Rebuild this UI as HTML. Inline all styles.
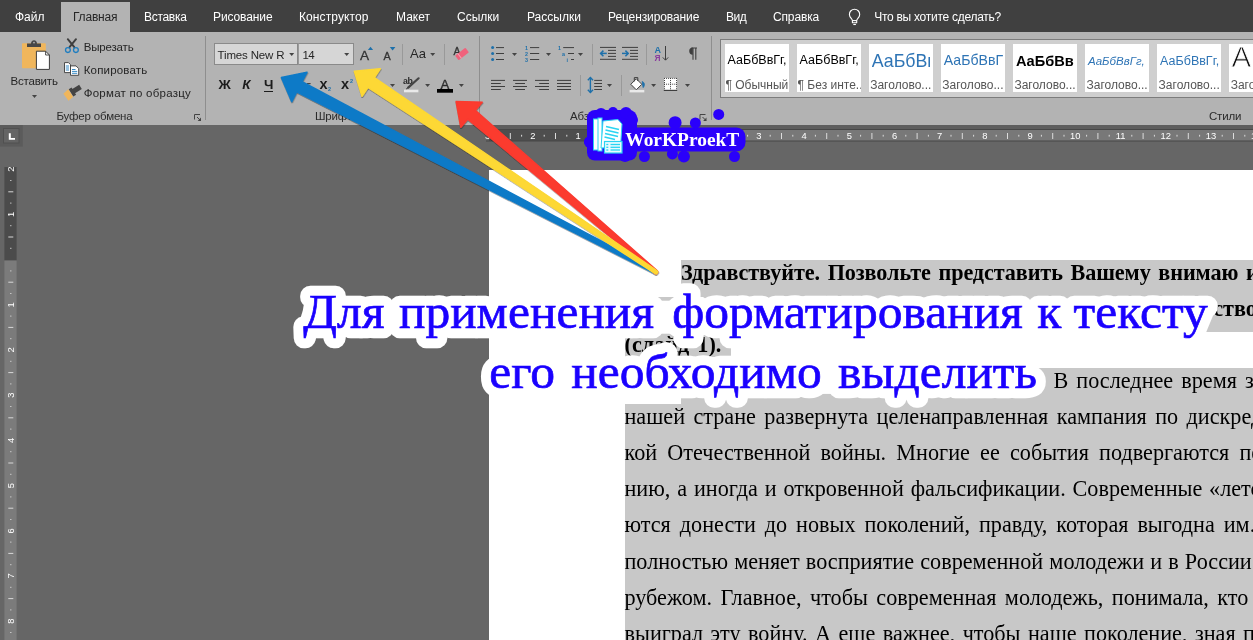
<!DOCTYPE html>
<html><head><meta charset="utf-8">
<style>
html,body{margin:0;padding:0;}
body{width:1253px;height:640px;overflow:hidden;position:relative;background:#666666;font-family:"Liberation Sans",sans-serif;}
.abs{position:absolute;}
#topbar{left:0;top:0;width:1253px;height:32px;background:#404040;}
.tab{position:absolute;top:10px;font-size:12px;color:#fff;white-space:nowrap;line-height:14px;}
#hometab{left:61px;top:2px;width:69px;height:30px;background:#b3b3b3;}
#ribbon{left:0;top:32px;width:1253px;height:93px;background:#b3b3b3;}
.rt{position:absolute;font-size:11.5px;color:#262626;white-space:nowrap;line-height:14px;}
.gl{position:absolute;font-size:11.5px;color:#2b2b2b;white-space:nowrap;line-height:14px;letter-spacing:-0.18px;}
.sep{position:absolute;width:1px;background:#8e8e8e;}
#page{left:489px;top:170px;width:800px;height:480px;background:#fff;}
.sel{position:absolute;background:#c8c8c8;}
.bt{position:absolute;font-family:"Liberation Serif",serif;color:#000;white-space:nowrap;font-size:22.2px;line-height:26px;}
.tile{position:absolute;top:44px;width:64.3px;height:47.7px;background:#fff;overflow:hidden;}
.tile .pv{position:absolute;left:4px;white-space:nowrap;}
.tile .lb{position:absolute;left:1.5px;top:33.7px;font-size:12px;color:#555;white-space:nowrap;line-height:14px;}
svg{position:absolute;left:0;top:0;}
</style></head><body>
<div id="wrap" style="position:absolute;left:0;top:0;width:1253px;height:640px;will-change:transform;">
<div id="topbar" class="abs"></div>
<div id="hometab" class="abs"></div>
<div id="ribbon" class="abs"></div>
<div id="tabs">
<span class="tab" style="left:15px">Файл</span>
<span class="tab" style="left:73px;color:#262626;letter-spacing:-0.2px">Главная</span>
<span class="tab" style="left:144px;letter-spacing:-0.3px">Вставка</span>
<span class="tab" style="left:213px;letter-spacing:-0.1px">Рисование</span>
<span class="tab" style="left:299px;letter-spacing:0.1px">Конструктор</span>
<span class="tab" style="left:396px">Макет</span>
<span class="tab" style="left:457px">Ссылки</span>
<span class="tab" style="left:527px">Рассылки</span>
<span class="tab" style="left:608px;letter-spacing:-0.1px">Рецензирование</span>
<span class="tab" style="left:726px;letter-spacing:-0.5px">Вид</span>
<span class="tab" style="left:773px;letter-spacing:-0.15px">Справка</span>
<span class="tab" style="left:874.2px;letter-spacing:-0.27px">Что вы хотите сделать?</span>
</div>

<!-- clipboard group text -->
<span class="rt" style="left:10.5px;top:74px;letter-spacing:-0.19px">Вставить</span>
<span class="rt" style="left:83.7px;top:40px;letter-spacing:-0.17px">Вырезать</span>
<span class="rt" style="left:83.7px;top:63px;letter-spacing:0.18px">Копировать</span>
<span class="rt" style="left:83.7px;top:86px;letter-spacing:0.25px">Формат по образцу</span>
<span class="gl" style="left:56.5px;top:108.6px">Буфер обмена</span>
<div class="sep" style="left:205px;top:36px;height:84px"></div>

<!-- font group -->
<div class="abs" style="left:214px;top:43px;width:84px;height:22px;background:#d6d6d6;border:1px solid #8a8a8a;box-sizing:border-box"></div>
<div class="abs" style="left:298px;top:43px;width:56px;height:22px;background:#d6d6d6;border:1px solid #8a8a8a;border-left:1px solid #9a9a9a;box-sizing:border-box"></div>
<span class="rt" style="left:217.6px;top:47.5px;letter-spacing:-0.16px">Times New R</span>
<span class="rt" style="left:302.4px;top:47.5px;letter-spacing:-0.5px">14</span>
<span class="rt" style="left:218.4px;top:77.5px;font-weight:bold;font-size:13.6px;color:#1c1c1c">Ж</span>
<span class="rt" style="left:242.2px;top:77.5px;font-weight:bold;font-style:italic;font-size:13.4px;color:#1c1c1c">К</span>
<span class="rt" style="left:264px;top:77.5px;font-weight:bold;font-size:13.4px;color:#1c1c1c;border-bottom:1.5px solid #1c1c1c;line-height:13px;padding-bottom:0px">Ч</span>
<span class="rt" style="left:319.5px;top:76.6px;font-weight:bold;font-size:14.5px;color:#1c1c1c">x</span>
<span class="rt" style="left:341px;top:76.6px;font-weight:bold;font-size:14.5px;color:#1c1c1c">x</span>
<span class="rt" style="left:410px;top:47px;font-size:13px">Aa</span>
<span class="gl" style="left:315px;top:108.6px">Шрифт</span>
<div class="sep" style="left:402px;top:44px;height:21px;background:#999"></div>
<div class="sep" style="left:444px;top:44px;height:21px;background:#999"></div>
<div class="sep" style="left:478.5px;top:36px;height:84px"></div>

<!-- paragraph group -->
<span class="gl" style="left:570px;top:108.6px">Абзац</span>
<div class="sep" style="left:592px;top:44px;height:21px;background:#999"></div>
<div class="sep" style="left:645.5px;top:44px;height:21px;background:#999"></div>
<div class="sep" style="left:580px;top:75px;height:21px;background:#999"></div>
<div class="sep" style="left:621px;top:75px;height:21px;background:#999"></div>
<div class="sep" style="left:711px;top:36px;height:84px"></div>

<!-- styles gallery -->
<div class="abs" style="left:720px;top:38.5px;width:540px;height:59px;border:1px solid #7c7c7c;box-sizing:border-box;background:#cfcfcf"></div>
<div class="tile" style="left:724.5px"><span class="pv" style="top:9px;font-size:12.5px;color:#000;left:3px">АаБбВвГг,</span><span class="lb" style="left:1px">¶ Обычный</span></div>
<div class="tile" style="left:796.6px"><span class="pv" style="top:9px;font-size:12.5px;color:#000;left:3px">АаБбВвГг,</span><span class="lb" style="left:1px">¶ Без инте...</span></div>
<div class="tile" style="left:868.7px"><span class="pv" style="top:7px;font-size:17.8px;color:#2e74b5;left:3px;width:58.3px;overflow:hidden;display:block">АаБбВв</span><span class="lb">Заголово...</span></div>
<div class="tile" style="left:940.8px"><span class="pv" style="top:8px;font-size:14.1px;color:#2e74b5;left:3px">АаБбВвГ</span><span class="lb">Заголово...</span></div>
<div class="tile" style="left:1012.9px"><span class="pv" style="top:8.5px;font-size:14.6px;color:#000;font-weight:bold;left:3px">АаБбВв</span><span class="lb">Заголово...</span></div>
<div class="tile" style="left:1085px"><span class="pv" style="top:10.6px;font-size:11.5px;color:#2e74b5;font-style:italic;left:3px">АаБбВвГг,</span><span class="lb">Заголово...</span></div>
<div class="tile" style="left:1157.1px"><span class="pv" style="top:10px;font-size:12.5px;color:#2e74b5;left:3px">АаБбВвГг,</span><span class="lb">Заголово...</span></div>
<div class="tile" style="left:1229.2px"><span class="pv" style="top:-4.1px;font-size:29.5px;color:#111;left:2.2px;-webkit-text-stroke:0.8px #fff;">А</span><span class="lb">Заголово...</span></div>
<span class="gl" style="left:1209px;top:108.6px">Стили</span>

<div id="page" class="abs"></div>

<!-- selection highlights -->
<div class="sel" style="left:681px;top:260px;width:580px;height:37px"></div>
<div class="sel" style="left:624.5px;top:296.5px;width:640px;height:35px"></div>
<div class="sel" style="left:624.5px;top:331.5px;width:106px;height:25px"></div>
<div class="sel" style="left:681px;top:368px;width:580px;height:37px"></div>
<div class="sel" style="left:624.5px;top:404.4px;width:640px;height:240px"></div>

<span class="bt" id="b1" style="word-spacing:2.3px;letter-spacing:-0.1px;left:681px;top:260.1px;font-weight:bold">Здравствуйте. Позвольте представить Вашему внимаю ис</span>
<span class="bt" id="b2" style="left:624.5px;top:296.1px;font-weight:bold;word-spacing:2px">следовательскую работу на тему «Великая</span>
<span class="bt" id="b2b" style="left:1190.6px;top:296.1px;font-weight:bold">чество</span>
<span class="bt" id="b3" style="word-spacing:2.5px;letter-spacing:0px;left:624.5px;top:332.3px;font-weight:bold">(слайд 1).</span>
<span class="bt" id="l1" style="word-spacing:2.5px;letter-spacing:0px;left:1053.5px;top:367.6px">В последнее время за</span>
<span class="bt" id="l2" style="word-spacing:2.87px;letter-spacing:0px;left:624.5px;top:403.8px">нашей стране развернута целенаправленная кампания по дискреди</span>
<span class="bt" id="l3" style="word-spacing:4.65px;letter-spacing:0px;left:624.5px;top:440.0px">кой Отечественной войны. Многие ее события подвергаются пе</span>
<span class="bt" id="l4" style="word-spacing:1.3px;letter-spacing:0px;left:624.5px;top:476.2px">нию, а иногда и откровенной фальсификации. Современные «летоп</span>
<span class="bt" id="l5" style="word-spacing:3.4px;letter-spacing:0px;left:624.5px;top:512.4px">ются донести до новых поколений, правду, которая выгодна им. </span>
<span class="bt" id="l6" style="word-spacing:0.6px;letter-spacing:0px;left:624.5px;top:548.6px">полностью меняет восприятие современной молодежи и в России </span>
<span class="bt" id="l7" style="word-spacing:2.9px;letter-spacing:0px;left:624.5px;top:584.8px">рубежом. Главное, чтобы современная молодежь, понимала, кто </span>
<span class="bt" id="l8" style="word-spacing:1.9px;letter-spacing:0px;left:624.5px;top:621.0px">выиграл эту войну. А еще важнее, чтобы наше поколение, зная п</span>
<svg width="1253" height="640" viewBox="0 0 1253 640"><defs><filter id="sh" x="-5%" y="-5%" width="110%" height="110%"><feDropShadow dx="0.3" dy="1" stdDeviation="0.6" flood-color="#000" flood-opacity="0.45"/></filter></defs>
<g id="hruler"><rect x="485" y="125" width="780" height="5" fill="#5e5e5e"/>
<rect x="489" y="129.5" width="135.5" height="11.5" fill="#4e4e4e"/>
<rect x="624.5" y="129.5" width="640" height="11.5" fill="#787878"/>
<rect x="486" y="129" width="780" height="1" fill="#474747"/>
<rect x="486" y="140.5" width="780" height="1" fill="#474747"/>
<text x="487.7" y="139.3" font-size="9.4" fill="#fff" text-anchor="middle" font-family="Liberation Sans">3</text>
<rect x="498.5" y="134.8" width="1" height="1.8" fill="#dcdcdc"/>
<rect x="509.8" y="133" width="1" height="6" fill="#dcdcdc"/>
<rect x="521.1" y="134.8" width="1" height="1.8" fill="#dcdcdc"/>
<text x="532.9" y="139.3" font-size="9.4" fill="#fff" text-anchor="middle" font-family="Liberation Sans">2</text>
<rect x="543.7" y="134.8" width="1" height="1.8" fill="#dcdcdc"/>
<rect x="555.0" y="133" width="1" height="6" fill="#dcdcdc"/>
<rect x="566.3" y="134.8" width="1" height="1.8" fill="#dcdcdc"/>
<text x="578.1" y="139.3" font-size="9.4" fill="#fff" text-anchor="middle" font-family="Liberation Sans">1</text>
<rect x="588.9" y="134.8" width="1" height="1.8" fill="#dcdcdc"/>
<rect x="600.2" y="133" width="1" height="6" fill="#dcdcdc"/>
<rect x="611.5" y="134.8" width="1" height="1.8" fill="#dcdcdc"/>
<rect x="634.1" y="134.8" width="1" height="1.8" fill="#dcdcdc"/>
<rect x="645.4" y="133" width="1" height="6" fill="#dcdcdc"/>
<rect x="656.7" y="134.8" width="1" height="1.8" fill="#dcdcdc"/>
<text x="668.5" y="139.3" font-size="9.4" fill="#fff" text-anchor="middle" font-family="Liberation Sans">1</text>
<rect x="679.3" y="134.8" width="1" height="1.8" fill="#dcdcdc"/>
<rect x="690.6" y="133" width="1" height="6" fill="#dcdcdc"/>
<rect x="701.9" y="134.8" width="1" height="1.8" fill="#dcdcdc"/>
<text x="713.7" y="139.3" font-size="9.4" fill="#fff" text-anchor="middle" font-family="Liberation Sans">2</text>
<rect x="724.5" y="134.8" width="1" height="1.8" fill="#dcdcdc"/>
<rect x="735.8" y="133" width="1" height="6" fill="#dcdcdc"/>
<rect x="747.1" y="134.8" width="1" height="1.8" fill="#dcdcdc"/>
<text x="758.9" y="139.3" font-size="9.4" fill="#fff" text-anchor="middle" font-family="Liberation Sans">3</text>
<rect x="769.7" y="134.8" width="1" height="1.8" fill="#dcdcdc"/>
<rect x="781.0" y="133" width="1" height="6" fill="#dcdcdc"/>
<rect x="792.3" y="134.8" width="1" height="1.8" fill="#dcdcdc"/>
<text x="804.1" y="139.3" font-size="9.4" fill="#fff" text-anchor="middle" font-family="Liberation Sans">4</text>
<rect x="814.9" y="134.8" width="1" height="1.8" fill="#dcdcdc"/>
<rect x="826.2" y="133" width="1" height="6" fill="#dcdcdc"/>
<rect x="837.5" y="134.8" width="1" height="1.8" fill="#dcdcdc"/>
<text x="849.3" y="139.3" font-size="9.4" fill="#fff" text-anchor="middle" font-family="Liberation Sans">5</text>
<rect x="860.1" y="134.8" width="1" height="1.8" fill="#dcdcdc"/>
<rect x="871.4" y="133" width="1" height="6" fill="#dcdcdc"/>
<rect x="882.7" y="134.8" width="1" height="1.8" fill="#dcdcdc"/>
<text x="894.5" y="139.3" font-size="9.4" fill="#fff" text-anchor="middle" font-family="Liberation Sans">6</text>
<rect x="905.3" y="134.8" width="1" height="1.8" fill="#dcdcdc"/>
<rect x="916.6" y="133" width="1" height="6" fill="#dcdcdc"/>
<rect x="927.9" y="134.8" width="1" height="1.8" fill="#dcdcdc"/>
<text x="939.7" y="139.3" font-size="9.4" fill="#fff" text-anchor="middle" font-family="Liberation Sans">7</text>
<rect x="950.5" y="134.8" width="1" height="1.8" fill="#dcdcdc"/>
<rect x="961.8" y="133" width="1" height="6" fill="#dcdcdc"/>
<rect x="973.1" y="134.8" width="1" height="1.8" fill="#dcdcdc"/>
<text x="984.9" y="139.3" font-size="9.4" fill="#fff" text-anchor="middle" font-family="Liberation Sans">8</text>
<rect x="995.7" y="134.8" width="1" height="1.8" fill="#dcdcdc"/>
<rect x="1007.0" y="133" width="1" height="6" fill="#dcdcdc"/>
<rect x="1018.3" y="134.8" width="1" height="1.8" fill="#dcdcdc"/>
<text x="1030.1" y="139.3" font-size="9.4" fill="#fff" text-anchor="middle" font-family="Liberation Sans">9</text>
<rect x="1040.9" y="134.8" width="1" height="1.8" fill="#dcdcdc"/>
<rect x="1052.2" y="133" width="1" height="6" fill="#dcdcdc"/>
<rect x="1063.5" y="134.8" width="1" height="1.8" fill="#dcdcdc"/>
<text x="1075.3" y="139.3" font-size="9.4" fill="#fff" text-anchor="middle" font-family="Liberation Sans">10</text>
<rect x="1086.1" y="134.8" width="1" height="1.8" fill="#dcdcdc"/>
<rect x="1097.4" y="133" width="1" height="6" fill="#dcdcdc"/>
<rect x="1108.7" y="134.8" width="1" height="1.8" fill="#dcdcdc"/>
<text x="1120.5" y="139.3" font-size="9.4" fill="#fff" text-anchor="middle" font-family="Liberation Sans">11</text>
<rect x="1131.3" y="134.8" width="1" height="1.8" fill="#dcdcdc"/>
<rect x="1142.6" y="133" width="1" height="6" fill="#dcdcdc"/>
<rect x="1153.9" y="134.8" width="1" height="1.8" fill="#dcdcdc"/>
<text x="1165.7" y="139.3" font-size="9.4" fill="#fff" text-anchor="middle" font-family="Liberation Sans">12</text>
<rect x="1176.5" y="134.8" width="1" height="1.8" fill="#dcdcdc"/>
<rect x="1187.8" y="133" width="1" height="6" fill="#dcdcdc"/>
<rect x="1199.1" y="134.8" width="1" height="1.8" fill="#dcdcdc"/>
<text x="1210.9" y="139.3" font-size="9.4" fill="#fff" text-anchor="middle" font-family="Liberation Sans">13</text>
<rect x="1221.7" y="134.8" width="1" height="1.8" fill="#dcdcdc"/>
<rect x="1233.0" y="133" width="1" height="6" fill="#dcdcdc"/>
<rect x="1244.3" y="134.8" width="1" height="1.8" fill="#dcdcdc"/>
<text x="1256.1" y="139.3" font-size="9.4" fill="#fff" text-anchor="middle" font-family="Liberation Sans">14</text>
<rect x="1266.9" y="134.8" width="1" height="1.8" fill="#dcdcdc"/>
<rect x="1278.2" y="133" width="1" height="6" fill="#dcdcdc"/>
<rect x="1289.5" y="134.8" width="1" height="1.8" fill="#dcdcdc"/></g>
<g id="vruler"><rect x="4.4" y="167" width="12.2" height="93.5" fill="#4b4b4b"/>
<rect x="4.4" y="260.5" width="12.2" height="400" fill="#7b7b7b"/>
<text transform="translate(14.2 169.2) rotate(-90)" font-size="9.4" fill="#fff" text-anchor="middle" font-family="Liberation Sans">2</text>
<rect x="10.2" y="180.0" width="1.2" height="1" fill="#d8d8d8"/>
<rect x="8.3" y="191.3" width="5" height="1" fill="#d8d8d8"/>
<rect x="10.2" y="202.6" width="1.2" height="1" fill="#d8d8d8"/>
<text transform="translate(14.2 214.4) rotate(-90)" font-size="9.4" fill="#fff" text-anchor="middle" font-family="Liberation Sans">1</text>
<rect x="10.2" y="225.2" width="1.2" height="1" fill="#d8d8d8"/>
<rect x="8.3" y="236.5" width="5" height="1" fill="#d8d8d8"/>
<rect x="10.2" y="247.8" width="1.2" height="1" fill="#d8d8d8"/>
<rect x="10.2" y="270.4" width="1.2" height="1" fill="#d8d8d8"/>
<rect x="8.3" y="281.7" width="5" height="1" fill="#d8d8d8"/>
<rect x="10.2" y="293.0" width="1.2" height="1" fill="#d8d8d8"/>
<text transform="translate(14.2 304.8) rotate(-90)" font-size="9.4" fill="#fff" text-anchor="middle" font-family="Liberation Sans">1</text>
<rect x="10.2" y="315.6" width="1.2" height="1" fill="#d8d8d8"/>
<rect x="8.3" y="326.9" width="5" height="1" fill="#d8d8d8"/>
<rect x="10.2" y="338.2" width="1.2" height="1" fill="#d8d8d8"/>
<text transform="translate(14.2 350.0) rotate(-90)" font-size="9.4" fill="#fff" text-anchor="middle" font-family="Liberation Sans">2</text>
<rect x="10.2" y="360.8" width="1.2" height="1" fill="#d8d8d8"/>
<rect x="8.3" y="372.1" width="5" height="1" fill="#d8d8d8"/>
<rect x="10.2" y="383.4" width="1.2" height="1" fill="#d8d8d8"/>
<text transform="translate(14.2 395.2) rotate(-90)" font-size="9.4" fill="#fff" text-anchor="middle" font-family="Liberation Sans">3</text>
<rect x="10.2" y="406.0" width="1.2" height="1" fill="#d8d8d8"/>
<rect x="8.3" y="417.3" width="5" height="1" fill="#d8d8d8"/>
<rect x="10.2" y="428.6" width="1.2" height="1" fill="#d8d8d8"/>
<text transform="translate(14.2 440.4) rotate(-90)" font-size="9.4" fill="#fff" text-anchor="middle" font-family="Liberation Sans">4</text>
<rect x="10.2" y="451.2" width="1.2" height="1" fill="#d8d8d8"/>
<rect x="8.3" y="462.5" width="5" height="1" fill="#d8d8d8"/>
<rect x="10.2" y="473.8" width="1.2" height="1" fill="#d8d8d8"/>
<text transform="translate(14.2 485.6) rotate(-90)" font-size="9.4" fill="#fff" text-anchor="middle" font-family="Liberation Sans">5</text>
<rect x="10.2" y="496.4" width="1.2" height="1" fill="#d8d8d8"/>
<rect x="8.3" y="507.7" width="5" height="1" fill="#d8d8d8"/>
<rect x="10.2" y="519.0" width="1.2" height="1" fill="#d8d8d8"/>
<text transform="translate(14.2 530.8) rotate(-90)" font-size="9.4" fill="#fff" text-anchor="middle" font-family="Liberation Sans">6</text>
<rect x="10.2" y="541.6" width="1.2" height="1" fill="#d8d8d8"/>
<rect x="8.3" y="552.9" width="5" height="1" fill="#d8d8d8"/>
<rect x="10.2" y="564.2" width="1.2" height="1" fill="#d8d8d8"/>
<text transform="translate(14.2 576.0) rotate(-90)" font-size="9.4" fill="#fff" text-anchor="middle" font-family="Liberation Sans">7</text>
<rect x="10.2" y="586.8" width="1.2" height="1" fill="#d8d8d8"/>
<rect x="8.3" y="598.1" width="5" height="1" fill="#d8d8d8"/>
<rect x="10.2" y="609.4" width="1.2" height="1" fill="#d8d8d8"/>
<text transform="translate(14.2 621.2) rotate(-90)" font-size="9.4" fill="#fff" text-anchor="middle" font-family="Liberation Sans">8</text>
<rect x="10.2" y="632.0" width="1.2" height="1" fill="#d8d8d8"/>
<rect x="8.3" y="643.3" width="5" height="1" fill="#d8d8d8"/>
<rect x="10.2" y="654.6" width="1.2" height="1" fill="#d8d8d8"/>
<text transform="translate(14.2 666.4) rotate(-90)" font-size="9.4" fill="#fff" text-anchor="middle" font-family="Liberation Sans">9</text>
<rect x="10.2" y="677.2" width="1.2" height="1" fill="#d8d8d8"/>
<rect x="8.3" y="688.5" width="5" height="1" fill="#d8d8d8"/>
<rect x="10.2" y="699.8" width="1.2" height="1" fill="#d8d8d8"/></g>
<rect x="0" y="125" width="22.8" height="21.6" fill="#5b5b5b"/>
<rect x="3.5" y="128.5" width="15.5" height="14.5" fill="#646464" stroke="#505050" stroke-width="1"/>
<path d="M8.8 133.3h2v4.6h4.2v1.9h-6.2z" fill="#fff"/>
<g id="icons">
<!-- lightbulb -->
<g fill="none" stroke="#fff" stroke-width="1.1" stroke-linejoin="round"><path d="M852.4 22.7 V20.6 C852.4 18.8 849.4 17.6 849.4 14.4 A5.15 5.15 0 0 1 859.7 14.4 C859.7 17.6 856.7 18.8 856.7 20.6 V22.7 Z"/><path d="M852.4 20.6 H856.7"/><path d="M853.3 24.5 H855.9"/></g>
<!-- paste -->
<rect x="22" y="43.3" width="23.8" height="25" rx="0.8" fill="#f0b65c"/>
<path d="M27 47 V43.6 H31 C31 41.8 32.2 40.3 34 40.3 C35.8 40.3 37 41.8 37 43.6 H41 V47 Z" fill="#484848"/>
<circle cx="34" cy="42.6" r="0.9" fill="#b3b3b3"/>
<path d="M36.4 51.2 H45.6 L49.4 55 V69.4 H36.4 Z" fill="#fff" stroke="#3c3c3c" stroke-width="1"/>
<path d="M45.6 51.2 V55 H49.4" fill="none" stroke="#3c3c3c" stroke-width="0.9"/>
<path d="M32 95 h5 l-2.5 3z" fill="#444"/>
<!-- scissors -->
<g stroke="#3e3e3e" stroke-width="1.9" stroke-linecap="round"><path d="M67.8 39.2 L74.3 47.2"/><path d="M76 39.2 L69.5 47.2"/></g>
<circle cx="67.9" cy="50.1" r="2.4" fill="none" stroke="#1e7dc0" stroke-width="1.3"/>
<circle cx="75.9" cy="50.1" r="2.4" fill="none" stroke="#1e7dc0" stroke-width="1.3"/>
<!-- copy -->
<path d="M64.5 62.6 H68.5 L70.5 64.6 V72.6 H64.5 Z" fill="#fff" stroke="#3c3c3c" stroke-width="0.9"/>
<g stroke="#1e7dc0" stroke-width="0.9"><path d="M65.8 66h3.2"/><path d="M65.8 68h3.2"/><path d="M65.8 70h3.2"/></g>
<path d="M70.5 65.9 H76 L78.7 68.6 V75.3 H70.5 Z" fill="#fff" stroke="#3c3c3c" stroke-width="0.9"/>
<g stroke="#1e7dc0" stroke-width="0.9"><path d="M72 69.5h3.5"/><path d="M72 71.4h5.2"/><path d="M72 73.3h5.2"/></g>
<!-- format painter -->
<g transform="translate(72.5 92) rotate(-32)"><rect x="0.5" y="-2.6" width="9" height="5" fill="#444"/><rect x="-1.8" y="-4.3" width="3.4" height="8.6" fill="#444"/><path d="M-2.2 -4.6 L-8.6 -3.4 L-8 5.2 L-2.2 4.6 Z" fill="#f0b65c"/></g>
<!-- launchers -->
<g fill="none" stroke="#444" stroke-width="1"><path d="M194.5 119.5 V114.5 H200"/><path d="M197 117 L200.3 120.3"/></g><path d="M201 117.6 V121 H197.6 Z" fill="#444"/>
<g fill="none" stroke="#444" stroke-width="1"><path d="M700 119.5 V114.5 H705.5"/><path d="M702.5 117 L705.8 120.3"/></g><path d="M706.5 117.6 V121 H703.1 Z" fill="#444"/>
<!-- dropdown arrows -->
<g fill="#444">
<path d="M289.2 53 h5 l-2.5 3z"/><path d="M344.2 53 h5 l-2.5 3z"/><path d="M430.2 53 h5 l-2.5 3z"/>
<path d="M390 84 h5 l-2.5 3z"/><path d="M425.1 84 h5 l-2.5 3z"/><path d="M458.9 84 h5 l-2.5 3z"/>
<path d="M512 53 h5 l-2.5 3z"/><path d="M546 53 h5 l-2.5 3z"/><path d="M578 53 h5 l-2.5 3z"/>
<path d="M607 84 h5 l-2.5 3z"/><path d="M651.1 84 h5 l-2.5 3z"/><path d="M685 84 h5 l-2.5 3z"/>
</g>
<!-- grow/shrink font -->
<text x="360" y="59.8" font-family="Liberation Sans" font-size="13.6" fill="#333" stroke="#333" stroke-width="0.3">A</text>
<path d="M367.9 50 h5.2 l-2.6 -3.3z" fill="#1e70aa"/>
<text x="383.4" y="59.8" font-family="Liberation Sans" font-size="10.8" fill="#333" stroke="#333" stroke-width="0.3">A</text>
<path d="M389.8 47.1 h5.6 l-2.8 3.3z" fill="#1e70aa"/>
<!-- clear formatting -->
<text x="453.6" y="54.8" font-family="Liberation Sans" font-size="10.5" fill="#333" stroke="#333" stroke-width="0.3">A</text>
<g transform="translate(462 54) rotate(-38)"><rect x="-6.5" y="-3" width="13" height="6" rx="0.8" fill="#f0627c"/><rect x="-3.6" y="-3" width="1" height="6" fill="#f8a8b6"/></g>
<!-- sub/superscript 2 -->
<text x="328" y="91" font-family="Liberation Sans" font-weight="bold" font-size="5.5" fill="#1e70aa">2</text>
<text x="350" y="83.2" font-family="Liberation Sans" font-weight="bold" font-size="5.5" fill="#1e70aa">2</text>
<rect x="307" y="83" width="3.6" height="1.2" fill="#444"/>
<!-- highlighter -->
<text x="403" y="83.8" font-family="Liberation Sans" font-size="8.8" fill="#2c2c2c" font-weight="bold" letter-spacing="-0.5">ab</text>
<path d="M418.6 78.3 L408.2 87.6" stroke="#444" stroke-width="2.2" stroke-linecap="round"/><path d="M409.2 86.4 L406.6 88.8" stroke="#444" stroke-width="1.1" stroke-linecap="round"/>
<rect x="404" y="89.7" width="14.4" height="2.6" fill="#e9e9e9"/>
<!-- font color -->
<text x="440.6" y="88.7" font-family="Liberation Sans" font-size="13.2" fill="#2c2c2c" stroke="#2c2c2c" stroke-width="0.35">A</text>
<rect x="437" y="89" width="16" height="3.7" fill="#000"/>
<!-- bullets -->
<g fill="#1e70aa"><circle cx="492.6" cy="47.6" r="1.5"/><circle cx="492.6" cy="53.5" r="1.5"/><circle cx="492.6" cy="59.5" r="1.5"/></g>
<g stroke="#3e3e3e" stroke-width="1"><path d="M496 47.6h8"/><path d="M496 53.5h8"/><path d="M496 59.5h8"/>
<path d="M530 47.6h9.2"/><path d="M530 53.5h9.2"/><path d="M530 59.5h9.2"/>
<path d="M563.2 47.6h10.8"/><path d="M568 53.5h6"/><path d="M571 59.5h3"/></g>
<g font-family="Liberation Sans" font-weight="bold" font-size="5.4" fill="#1e70aa"><text x="525" y="49.6">1</text><text x="525" y="55.5">2</text><text x="525" y="61.5">3</text>
<text x="558" y="49.6">1</text><text x="562" y="55.5">a</text><text x="566.6" y="61.5">i</text></g>
<!-- indent -->
<g stroke="#3e3e3e" stroke-width="1"><path d="M600 47.4h16"/><path d="M600 59.3h16"/><path d="M608 50.4h8"/><path d="M608 53.4h8"/><path d="M608 56.4h8"/>
<path d="M622 47.4h16"/><path d="M622 59.3h16"/><path d="M630 50.4h8"/><path d="M630 53.4h8"/><path d="M630 56.4h8"/></g>
<g fill="none" stroke="#1e70aa" stroke-width="1.5"><path d="M606.8 53.4H600.6"/><path d="M603.4 50.6 L600.6 53.4 L603.4 56.2"/><path d="M622 53.4H628.2"/><path d="M625.4 50.6 L628.2 53.4 L625.4 56.2"/></g>
<!-- sort -->
<text x="654.6" y="52.7" font-family="Liberation Sans" font-weight="bold" font-size="9" fill="#1e70aa">A</text>
<text x="654.6" y="60.6" font-family="Liberation Sans" font-weight="bold" font-size="8.4" fill="#8a3c9e">Я</text>
<g fill="none" stroke="#3e3e3e" stroke-width="1"><path d="M665.5 46 V60"/><path d="M662.8 57.4 L665.5 60.2 L668.2 57.4"/></g>
<!-- pilcrow -->
<path d="M691.5 48 H697 M693 48 V59.8 M695.8 48 V59.8" fill="none" stroke="#3e3e3e" stroke-width="1.1"/><path d="M692.8 47.5 A3.6 3.6 0 0 0 692.8 54.7 Z" fill="#3e3e3e"/>
<!-- alignment -->
<g stroke="#3e3e3e" stroke-width="1"><path d="M491 80.4h14"/><path d="M491 83.5h9.8"/><path d="M491 86.5h14"/><path d="M491 89.5h9.8"/>
<path d="M513 80.4h14"/><path d="M515.2 83.5h9.8"/><path d="M513 86.5h14"/><path d="M515.2 89.5h9.8"/>
<path d="M535 80.4h14"/><path d="M539.2 83.5h9.8"/><path d="M535 86.5h14"/><path d="M539.2 89.5h9.8"/>
<path d="M557 80.4h14"/><path d="M557 83.5h14"/><path d="M557 86.5h14"/><path d="M557 89.5h14"/>
<path d="M594.2 80.4h7.8"/><path d="M594.2 83.5h7.8"/><path d="M594.2 86.5h7.8"/><path d="M594.2 89.5h7.8"/></g>
<g fill="none" stroke="#1e70aa" stroke-width="1.4"><path d="M590.4 77.6 V92.4"/><path d="M587.8 80.2 L590.4 77.6 L593 80.2"/><path d="M587.8 89.8 L590.4 92.4 L593 89.8"/></g>
<!-- shading -->
<path d="M636.3 78.8 L641.8 84.3 L636.3 89.8 L630.8 84.3 Z" fill="#fff" stroke="#3e3e3e" stroke-width="1"/>
<path d="M634.3 81.4 V77.6 H637.8 V81" fill="none" stroke="#3e3e3e" stroke-width="1"/>
<path d="M642.2 81.5 C644.6 82.5 645.2 85 643.2 87.6 C642.6 86 642.6 84 642.2 81.5Z" fill="#1e70aa" stroke="#1e70aa" stroke-width="0.8"/>
<rect x="629.6" y="89.9" width="14.7" height="2.5" fill="#e9e9e9"/>
<!-- borders -->
<rect x="664" y="78" width="13" height="12.5" fill="#fff"/>
<g stroke="#3e3e3e" stroke-width="1" stroke-dasharray="1 1.05"><path d="M664 78.4h13"/><path d="M664.5 78 v12.5"/><path d="M676.5 78 v12.5"/><path d="M670.5 78 v12.5"/><path d="M664 84.2h13"/></g>
<path d="M663.8 90.4h13.4" stroke="#3e3e3e" stroke-width="1.2"/>
</g>

<g id="logo"><g fill="#2a00fb">
<rect x="587" y="110" width="50" height="50.5" rx="8"/><circle cx="588.3" cy="141.7" r="4.3"/>
<rect x="600" y="127.5" width="145.5" height="24" rx="9"/>
<circle cx="601" cy="114" r="6"/><circle cx="613" cy="112" r="5"/><circle cx="626" cy="113" r="6"/><circle cx="632" cy="120" r="6"/>
<circle cx="718.7" cy="114.4" r="5.5"/><circle cx="675.1" cy="122.7" r="6.5"/><circle cx="695.4" cy="123" r="5.5"/>
<circle cx="644.4" cy="156.5" r="5.5"/><circle cx="672.4" cy="153.9" r="5.5"/><circle cx="683.9" cy="156.5" r="6"/><circle cx="734.5" cy="156.5" r="5.5"/>
<circle cx="590" cy="142" r="6"/><circle cx="625" cy="156" r="6"/>
</g>
<g>
<rect x="593.5" y="119" width="5" height="31" fill="#fff" stroke="#2ad4f2" stroke-width="1"/>
<rect x="598" y="118" width="4" height="33" fill="#fff" stroke="#2ad4f2" stroke-width="1"/>
<path d="M603 121 L618 119.5 L622 124 L620.5 147 L601 148 Z" fill="#fff" stroke="#2ad4f2" stroke-width="1"/>
<g stroke="#2ad4f2" stroke-width="1.6"><path d="M606 126.5 L619 129.5"/><path d="M605.5 130 L618.5 133"/><path d="M605 133.5 L618 136.5"/><path d="M604.5 137 L615 139.5"/></g>
<rect x="604.5" y="141.5" width="17.5" height="11.5" fill="#e8fbff" stroke="#2ad4f2" stroke-width="1.2"/>
<g stroke="#2ad4f2" stroke-width="1.3"><path d="M610.5 144.5h9.5"/><path d="M610.5 147.3h9.5"/><path d="M610.5 150h9.5"/><path d="M606.3 144.5h2"/><path d="M606.3 147.3h2"/><path d="M606.3 150h2"/></g>
</g>
<text x="625.3" y="146.1" font-family="Liberation Serif" font-weight="bold" font-size="18.2" fill="#fff" textLength="114" lengthAdjust="spacingAndGlyphs">WorKProekT</text></g>
<g id="arrows"><g filter="url(#sh)"><path d="M281.4 77.5 L307.1 72.1 L302.1 81.7 L656.6 270.4 A1.8 1.8 0 0 1 655.0 273.6 L296.7 92.0 L291.8 101.6 Z" fill="#0d7ac7" stroke="#0d7ac7" stroke-width="1.4" stroke-linejoin="round"/><path d="M456.1 101.5 L482.3 102.1 L475.3 110.3 L657.0 270.6 A1.8 1.8 0 0 1 654.6 273.4 L467.8 119.1 L460.8 127.3 Z" fill="#fb3a2f" stroke="#fb3a2f" stroke-width="1.4" stroke-linejoin="round"/><path d="M354.3 71.2 L380.4 68.6 L374.4 77.6 L656.8 270.5 A1.8 1.8 0 0 1 654.8 273.5 L368.0 87.3 L362.0 96.3 Z" fill="#fdd834" stroke="#fdd834" stroke-width="1.4" stroke-linejoin="round"/></g></g>
<g id="overlay"><rect x="380.0" y="300.7" width="22.0" height="33" fill="#fff"/><rect x="650.0" y="300.7" width="26.0" height="33" fill="#fff"/><rect x="1018.0" y="300.7" width="22.0" height="33" fill="#fff"/><rect x="1058.0" y="300.7" width="19.0" height="33" fill="#fff"/><rect x="550.0" y="360.9" width="24.0" height="33" fill="#fff"/><rect x="816.0" y="360.9" width="25.0" height="33" fill="#fff"/><rect x="306" y="303" width="898" height="27" fill="#fff"/><rect x="493" y="363" width="540" height="27" fill="#fff"/><g font-family="Liberation Serif" font-size="49.5"><g fill="#fff" stroke="#fff" stroke-width="20.5" stroke-linejoin="round" stroke-linecap="round"><text y="328.2"><tspan x="303.3">Для</tspan><tspan x="398.9">применения</tspan><tspan x="672.3">форматирования</tspan><tspan x="1037.2">к</tspan><tspan x="1073.6">тексту</tspan></text><text y="388.4"><tspan x="489.3">его</tspan><tspan x="571.3">необходимо</tspan><tspan x="837.9">выделить</tspan></text></g><g fill="#1a00ff" stroke="#1a00ff" stroke-width="0.7"><text y="328.2"><tspan x="303.3">Для</tspan><tspan x="398.9">применения</tspan><tspan x="672.3">форматирования</tspan><tspan x="1037.2">к</tspan><tspan x="1073.6">тексту</tspan></text><text y="388.4"><tspan x="489.3">его</tspan><tspan x="571.3">необходимо</tspan><tspan x="837.9">выделить</tspan></text></g></g></g>
</svg>
</div>
</body></html>
